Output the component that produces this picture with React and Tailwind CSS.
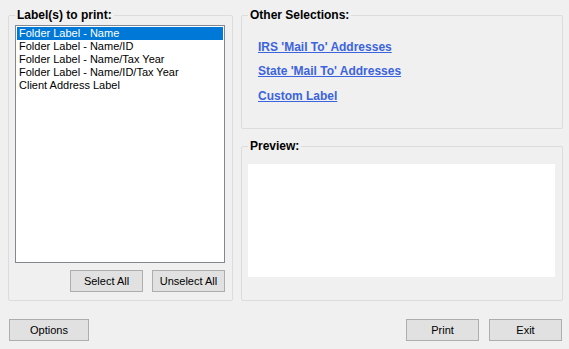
import React, { useState } from 'react';

const labels = [
  'Folder Label - Name',
  'Folder Label - Name/ID',
  'Folder Label - Name/Tax Year',
  'Folder Label - Name/ID/Tax Year',
  'Client Address Label',
];

const links = ["IRS 'Mail To' Addresses", "State 'Mail To' Addresses", 'Custom Label'];

// fieldset padding would shift the legend, so padding goes on the inner div
const Group = ({ title, className, inner, children }) => (
  <fieldset className={`border border-[#dcdcdc] rounded-[2px] ${className}`}>
    <legend className="ml-[6px] px-[2px] text-[12px] font-bold leading-[12px] text-black">{title}</legend>
    <div className={inner}>{children}</div>
  </fieldset>
);

const Button = ({ children, className = '' }) => (
  <button className={`h-[22px] border border-[#adadad] bg-[#e1e1e1] text-[11px] text-black leading-none ${className}`}>
    {children}
  </button>
);

export default function App() {
  const [selected, setSelected] = useState(0);

  return (
    <div className="w-[569px] h-[349px] bg-[#f0f0f0] font-['Liberation_Sans',Arial,sans-serif] flex flex-col pl-[8px] pr-[6px] pt-[9px]">
      <div className="flex gap-[8px] h-[292px]">
        {/* Labels */}
        <Group title="Label(s) to print:" className="w-[225px] h-[292px]" inner="pl-[6px] pr-[7px]">
          <div className="mt-[4px] h-[238px] border border-[#828790] bg-white p-[1px]">
            {labels.map((l, i) => (
              <div
                key={l}
                onClick={() => setSelected(i)}
                className={`h-[13px] pl-[2px] text-[11px] leading-[13px] whitespace-nowrap ${
                  i === selected ? 'bg-[#0078d7] text-white' : 'text-black'
                }`}
              >
                {l}
              </div>
            ))}
          </div>
          <div className="flex justify-end gap-[9px] mt-[7px]">
            <Button className="w-[73px]">Select All</Button>
            <Button className="w-[73px]">Unselect All</Button>
          </div>
        </Group>

        {/* Right column */}
        <div className="flex flex-col gap-[11px] w-[322px]">
          <Group title="Other Selections:" className="h-[120px]" inner="pl-[16px]">
            <div className="flex flex-col gap-[10px] mt-[19px]">
              {links.map((l, i) => (
                <a
                  key={l}
                  href="#"
                  className={`text-[12px] font-bold leading-[14px] text-[#3c64dc] underline self-start ${i === 2 ? 'mt-[1px]' : ''}`}
                >
                  {l}
                </a>
              ))}
            </div>
          </Group>
          <Group title="Preview:" className="h-[161px]" inner="pl-[6px] pr-[7px]">
            <div className="mt-[12px] h-[113px] bg-white" />
          </Group>
        </div>
      </div>

      <div className="flex items-center mt-[18px]">
        <Button className="w-[80px] ml-[1px]">Options</Button>
        <div className="flex-1" />
        <Button className="w-[73px]">Print</Button>
        <Button className="w-[73px] ml-[10px] mr-[1px]">Exit</Button>
      </div>
    </div>
  );
}
